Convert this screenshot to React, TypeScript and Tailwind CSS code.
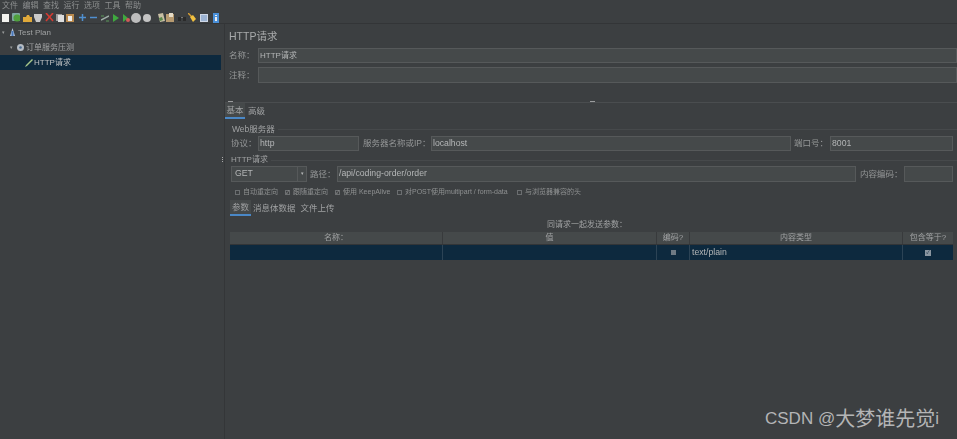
import React from "react";

const cjk = "font-['Liberation_Sans','Noto_Sans_CJK_SC',sans-serif]";

const menus = ["文件", "编辑", "查找", "运行", "选项", "工具", "帮助"];

// small toolbar pictures, each one sits in its own slot
const tools: { w: number; el: React.ReactNode }[] = [
  { w: 10, el: <svg width="8" height="8"><rect width="7" height="8" fill="#f2f2ee" /></svg> },
  { w: 11, el: <svg width="8" height="9"><rect width="8" height="8" rx="1" fill="#7fa8a0" /><circle cx="5" cy="5" r="3.5" fill="#4fa03c" /></svg> },
  { w: 11, el: <svg width="9" height="8"><path d="M0 3h3l1-2 2 0 1 2h2v5H0z" fill="#e0a93a" /></svg> },
  { w: 11, el: <svg width="8" height="8"><path d="M0 0h8v3L6 8H2L0 3z" fill="#c9c9c9" /></svg> },
  { w: 11, el: <svg width="9" height="9" fill="none"><path d="M1 0l7 8M8 0L1 8" stroke="#d23b32" strokeWidth="1.6" /></svg> },
  { w: 10, el: <svg width="8" height="8"><rect width="6" height="7" fill="#9a9a9a" /><rect x="2" y="1" width="6" height="7" fill="#ddd" /></svg> },
  { w: 13, el: <svg width="8" height="8"><rect width="8" height="8" fill="#b98a4e" /><rect x="2" y="2" width="4" height="5" fill="#eee" /></svg> },
  { w: 11, el: <svg width="7" height="7" fill="none"><path d="M3.5 0v7M0 3.5h7" stroke="#4f8fd0" strokeWidth="1.5" /></svg> },
  { w: 11, el: <svg width="7" height="7" fill="none"><path d="M0 3.5h7" stroke="#4f8fd0" strokeWidth="1.5" /></svg> },
  { w: 12, el: <svg width="8" height="8" fill="none"><path d="M0 6l8-4" stroke="#9fb0a8" strokeWidth="1.4" /><path d="M0 2h3M5 7h3" stroke="#5a9a5a" /></svg> },
  { w: 10, el: <svg width="6" height="8"><path d="M0 0l6 4-6 4z" fill="#3fa83f" /></svg> },
  { w: 8, el: <svg width="7" height="8"><path d="M0 0l5 4-5 4z" fill="#3fa83f" /><circle cx="5" cy="6" r="2" fill="#d05a5a" /></svg> },
  { w: 12, el: <svg width="10" height="10"><circle cx="5" cy="5" r="5" fill="#bdbdbd" /></svg> },
  { w: 15, el: <svg width="8" height="8"><circle cx="4" cy="4" r="4" fill="#c4c4c4" /></svg> },
  { w: 8, el: <svg width="7" height="9"><path d="M0 1l5-1 2 8-5 1z" fill="#c8bfa4" /><path d="M1 5l3-1 1 3-3 1z" fill="#5a8a4a" /></svg> },
  { w: 12, el: <svg width="8" height="9"><rect y="1" width="8" height="8" fill="#b79a70" /><rect x="3" width="4" height="4" fill="#e5dcc8" /></svg> },
  { w: 10, el: <svg width="8" height="6"><rect y="2" width="3" height="4" fill="#2a2a2a" /><rect x="5" y="2" width="3" height="4" fill="#2a2a2a" /><rect x="3" y="2" width="2" height="1" fill="#777" /></svg> },
  { w: 12, el: <svg width="8" height="9"><path d="M0 0l4 4" stroke="#d9a032" strokeWidth="1.4" /><path d="M2 4l3-2 3 4-3 3z" fill="#f0c040" /></svg> },
  { w: 13, el: <svg width="8" height="8"><rect width="8" height="8" fill="#cfd8e6" /><path d="M1 2h6M1 4h6M1 6h6" stroke="#6a8fc0" /></svg> },
  { w: 8, el: <svg width="6" height="10"><rect width="6" height="10" fill="#4a90d9" /><rect x="2" y="2" width="2" height="1" fill="#eee" /><rect x="2" y="4" width="2" height="4" fill="#eee" /></svg> },
];

function Field({ className, children }: { className: string; children?: React.ReactNode }) {
  return (
    <div className={`flex items-center border border-[#56595a] bg-[#45494a] px-[1px] text-[8.7px] text-[#b4b6b7] ${className}`}>
      {children}
    </div>
  );
}

function Label({ className, children }: { className?: string; children: React.ReactNode }) {
  return <span className={`whitespace-nowrap text-[8.5px] text-[#949697] ${className ?? ""}`}>{children}</span>;
}

function Check({ label, checked, className }: { label: string; checked?: boolean; className: string }) {
  return (
    <div className={`flex items-center gap-[3px] whitespace-nowrap text-[7px] text-[#8f9192] ${className}`}>
      <span className="flex h-[5px] w-[5px] items-center justify-center border border-[#6b6e70] text-[5px] leading-none text-[#aaaaaa]">
        {checked ? "✓" : ""}
      </span>
      {label}
    </div>
  );
}

function TreeRow({ pad, selected, icon, label }: { pad: string; selected?: boolean; icon: React.ReactNode; label: string }) {
  return (
    <div className={`flex h-[15px] items-center text-[8px] text-[#a0a2a3] ${pad} ${selected ? "bg-[#0d293e] text-[#bfc1c2]" : ""}`}>
      {icon}
      <span>{label}</span>
    </div>
  );
}

export default function App() {
  return (
    <div className={`relative h-[439px] w-[957px] overflow-hidden bg-[#3c3f41] ${cjk}`}>
      <div className="flex h-full flex-col blur-[0.5px]">
        {/* Menu */}
        <div className="flex h-[12px] items-center gap-[5.5px] pl-[2px] text-[8px] text-[#8d8f90]">
          {menus.map((m) => (
            <span key={m} className="w-[15px] whitespace-nowrap">{m}</span>
          ))}
        </div>

        {/* Toolbar */}
        <div className="flex h-[12px] items-center border-b border-[#333537] pl-[2px]">
          {tools.map((t, i) => (
            <div key={i} className="flex shrink-0 items-center" style={{ width: t.w }}>{t.el}</div>
          ))}
        </div>

        <div className="flex min-h-0 flex-1">
          {/* Tree */}
          <div className="w-[221px] shrink-0 pt-[1px]">
            <TreeRow
              pad="pl-[2px]"
              label="Test Plan"
              icon={
                <>
                  <span className="mr-[4px] w-[4px] text-[5px] text-[#9a9c9d]">▾</span>
                  <svg width="5" height="9" className="mr-[3px]"><path d="M2.5 0l2.5 8H0z" fill="#b7c6dc" /><rect x="1.5" y="3" width="2" height="5" fill="#4a78b8" /></svg>
                </>
              }
            />
            <TreeRow
              pad="pl-[10px]"
              label="订单服务压测"
              icon={
                <>
                  <span className="mr-[3px] w-[4px] text-[5px] text-[#9a9c9d]">▾</span>
                  <svg width="7" height="7" className="mr-[2px]"><circle cx="3.5" cy="3.5" r="3.5" fill="#b5bcc4" /><circle cx="3.5" cy="3.5" r="1.3" fill="#4a6a90" /></svg>
                </>
              }
            />
            <TreeRow
              pad="pl-[25px]"
              selected
              label="HTTP请求"
              icon={
                <svg width="8" height="8" className="mr-[1px]" fill="none"><path d="M0 8l2-1 6-6-1-1-6 6z" fill="#a8c88a" /></svg>
              }
            />
          </div>

          {/* Divider */}
          <div className="flex w-[4px] shrink-0 flex-col items-center justify-center gap-[1px] border-r border-[#343638] pb-[145px]">
            <span className="h-[1px] w-[1px] bg-[#aaaaaa]" />
            <span className="h-[1px] w-[1px] bg-[#aaaaaa]" />
            <span className="h-[1px] w-[1px] bg-[#aaaaaa]" />
          </div>

          {/* Editor */}
          <div className="min-w-0 flex-1">
            <div className="pl-[4px] pt-[5px] text-[10.5px] leading-[15px] text-[#a9abac]">HTTP请求</div>
            <div className="mt-[4px] flex h-[15px] items-center pl-[4px]">
              <Label className="w-[29px]">名称：</Label>
              <Field className="h-[15px] flex-1 text-[8px]">HTTP请求</Field>
            </div>
            <div className="mt-[4px] flex h-[16px] items-center pl-[4px]">
              <Label className="w-[29px]">注释：</Label>
              <Field className="h-[16px] flex-1" />
            </div>

            {/* Split bar */}
            <div className="mt-[17px] flex h-[3px] items-center border-b border-[#4a4d4f] pl-[3px]">
              <span className="h-[1px] w-[5px] bg-[#9a9c9d]" />
              <span className="ml-[357px] h-[1px] w-[5px] bg-[#9a9c9d]" />
            </div>

            {/* Basic / Advanced tabs */}
            <div className="flex h-[16px] items-stretch text-[8.5px] text-[#a0a2a3]">
              <div className="flex w-[20px] items-center justify-center border-b-2 border-[#4a88c7] bg-[#45494a]">基本</div>
              <div className="ml-[3px] flex items-center">高级</div>
            </div>

            <div className="flex h-[16px] items-center pl-[7px] pt-[4px] text-[8.5px] text-[#a0a2a3]">
              <span className="whitespace-nowrap">Web服务器</span>
              <span className="ml-[3px] h-[1px] flex-1 bg-[#46494b]" />
            </div>

            <div className="mt-[1px] flex h-[15px] items-center pl-[6px] pr-[4px]">
              <Label className="w-[27px]">协议：</Label>
              <Field className="h-[15px] w-[101px]">http</Field>
              <Label className="ml-[4px] w-[68px]">服务器名称或IP：</Label>
              <Field className="h-[15px] w-[360px]">localhost</Field>
              <Label className="ml-[3px] w-[36px]">端口号：</Label>
              <Field className="h-[15px] flex-1">8001</Field>
            </div>

            <div className="mt-[3px] flex h-[12px] items-center pl-[6px] text-[8px] text-[#a0a2a3]">
              <span className="whitespace-nowrap">HTTP请求</span>
              <span className="ml-[3px] h-[1px] flex-1 bg-[#46494b]" />
            </div>

            <div className="flex h-[16px] items-center pl-[6px] pr-[4px]">
              <div className="flex h-[16px] w-[76px] items-center border border-[#56595a] bg-[#45494a] pl-[3px] text-[8.7px] text-[#b4b6b7]">
                <span className="flex-1">GET</span>
                <span className="flex h-full w-[9px] items-center justify-center border-l border-[#56595a] text-[5px]">▾</span>
              </div>
              <Label className="ml-[3px] w-[27px]">路径：</Label>
              <Field className="h-[16px] w-[519px]">/api/coding-order/order</Field>
              <Label className="ml-[4px] w-[44px]">内容编码：</Label>
              <Field className="h-[16px] flex-1" />
            </div>

            <div className="relative mt-[5px] h-[10px]">
              <Check className="absolute left-[10px] top-0" label="自动重定向" />
              <Check className="absolute left-[60px] top-0" label="跟随重定向" checked />
              <Check className="absolute left-[110px] top-0" label="使用 KeepAlive" checked />
              <Check className="absolute left-[172px] top-0" label="对POST使用multipart / form-data" />
              <Check className="absolute left-[292px] top-0" label="与浏览器兼容的头" />
            </div>

            {/* Params tabs */}
            <div className="mt-[3px] flex h-[16px] items-stretch pl-[5px] text-[8.5px] text-[#a0a2a3]">
              <div className="flex w-[21px] items-center justify-center border-b-2 border-[#4a88c7] bg-[#45494a]">参数</div>
              <div className="ml-[2px] flex items-center">消息体数据</div>
              <div className="ml-[5px] flex items-center">文件上传</div>
            </div>

            <div className="mt-[2px] flex h-[14px] items-center justify-center pr-[8px] text-[8px] text-[#a0a2a3]">同请求一起发送参数：</div>

            {/* Params table */}
            <div className="ml-[5px] w-[723px]">
              <div className="flex h-[13px] border-b border-[#333537] bg-[#45494a] text-[8px] text-[#a0a2a3]">
                <div className="flex w-[213px] items-center justify-center border-r border-[#383a3c]">名称：</div>
                <div className="flex w-[214px] items-center justify-center border-r border-[#383a3c]">值</div>
                <div className="flex w-[33px] items-center justify-center border-r border-[#383a3c]">编码?</div>
                <div className="flex w-[213px] items-center justify-center border-r border-[#383a3c]">内容类型</div>
                <div className="flex flex-1 items-center justify-center">包含等于?</div>
              </div>
              <div className="flex h-[15px] bg-[#0d293e] text-[8.7px] text-[#b4b6b7]">
                <div className="w-[213px] border-r border-[#2c4355]" />
                <div className="w-[214px] border-r border-[#2c4355]" />
                <div className="flex w-[33px] items-center justify-center border-r border-[#2c4355]">
                  <span className="h-[5px] w-[5px] bg-[#6f7a84]" />
                </div>
                <div className="flex w-[213px] items-center border-r border-[#2c4355] pl-[2px]">text/plain</div>
                <div className="flex flex-1 items-center justify-center">
                  <span className="flex h-[6px] w-[6px] items-center justify-center bg-[#8b96a0] text-[5px] leading-none text-[#0d293e]">✓</span>
                </div>
              </div>
            </div>
          </div>
        </div>
      </div>

      {/* Watermark */}
      <div className="absolute left-[765px] top-[408px] flex items-center whitespace-nowrap text-[17px] leading-[22px] text-[#b4b5b6]">
        <span>CSDN @</span>
        <span className="text-[20px]">大梦谁先觉</span>
        <span>i</span>
      </div>
    </div>
  );
}
